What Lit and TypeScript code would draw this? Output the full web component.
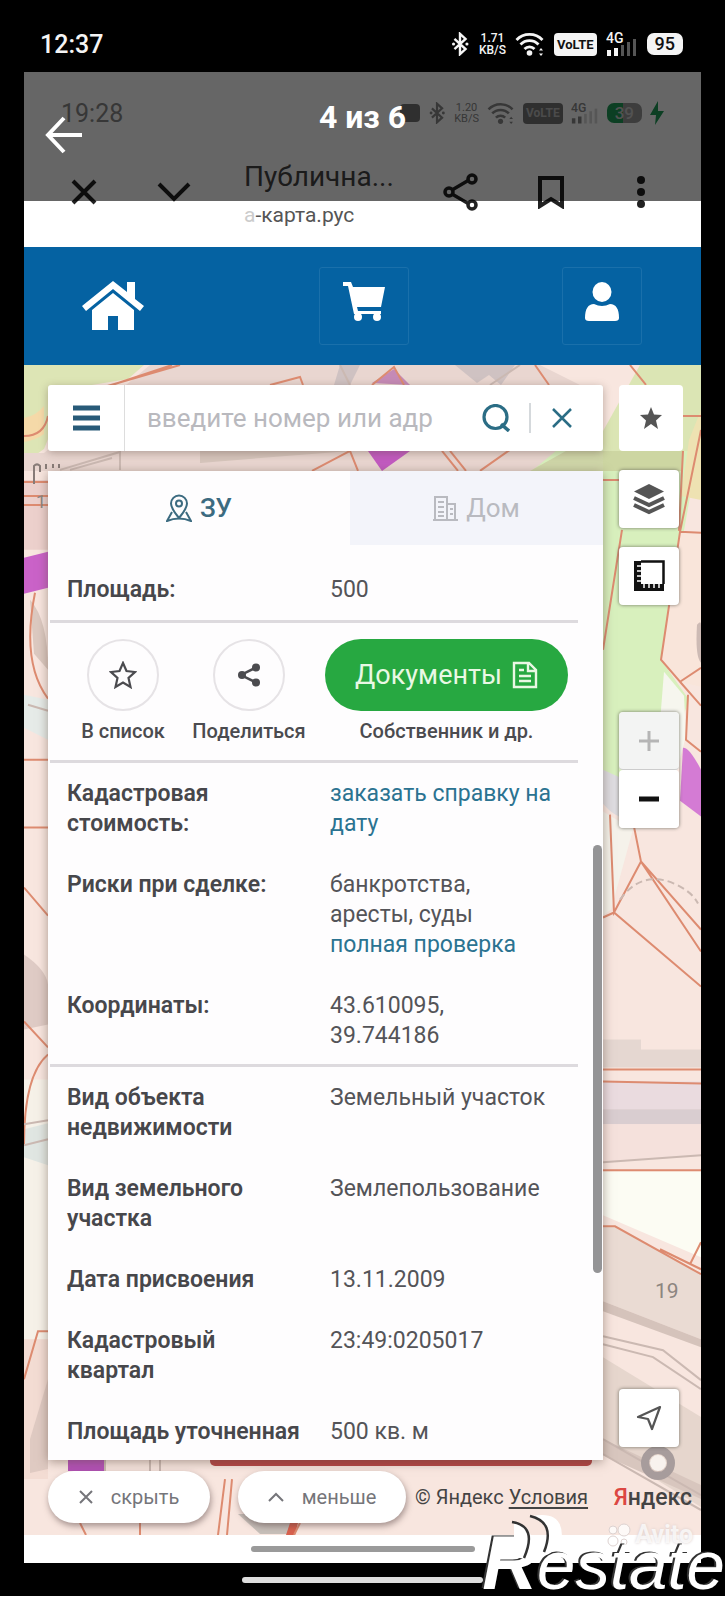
import { LitElement, html, css, svg } from "lit";
import { customElement } from "lit/decorators.js";

const bluetooth = html`<svg class="bt" viewBox="0 0 20 26"><path d="M4 7.500l12 11L10 24V2l6 5.500L4 18.500" fill="none" stroke="currentColor" stroke-width="2.600"/><circle cx="3" cy="13" r="1.700" fill="currentColor"/><circle cx="17.500" cy="13" r="1.700" fill="currentColor"/></svg>`;
const wifi = html`<svg class="wifi" viewBox="0 0 30 26"><g fill="none" stroke="currentColor" stroke-width="2.800"><path d="M1.500 9a18 18 0 0 1 26 0"/><path d="M5.500 13.500a12.500 12.500 0 0 1 18 0"/><path d="M9.500 18a7 7 0 0 1 10 0"/></g><circle cx="14.500" cy="22" r="2.800" fill="currentColor"/><path d="M26 17l2 2.500h-4zM26 25l-2-2.500h4z" fill="currentColor"/></svg>`;
const signal = html`<svg class="signal" viewBox="0 0 32 26"><g fill="currentColor"><rect x="1" y="19" width="4" height="6"/><rect x="8" y="17" width="4" height="8"/><rect x="15" y="14" width="3" height="11" opacity=".35"/><rect x="21" y="11" width="3" height="14" opacity=".35"/><rect x="27" y="8" width="3" height="17" opacity=".35"/></g><text x="0" y="12" font-size="14" font-weight="500" fill="currentColor">4G</text></svg>`;

const line = (d: string) => svg`<path d=${d}/>`;

const mapArt = html`<svg class="map-art" viewBox="24 365 677 1171" preserveAspectRatio="none" aria-hidden="true">
  <rect x="24" y="365" width="677" height="1171" fill="#f8e6df"/>
  <path d="M24 365h120l-16 14-60 10-24 60-20 14z" fill="#dde5b5"/>
  <path d="M24 418q12-2 20-12v28q-8 6-20 8z" fill="#f5d9a8"/>
  <path d="M150 365h390l40 20 20 20v66H24v-18h20z" fill="#e9d6d0"/>
  <path d="M340 365h20l-10 20h-16zM455 365h60l-14 20-12-10-12 8z" fill="#cfc2c2"/>
  <path d="M200 451h150l-150 12z" fill="#d6c5bc"/>
  <path d="M640 365h61v70L661 660l28 40-14 40-20 75-52-40V470h-70l30-25h46l20-40z" fill="#d8f0bd"/>
  <path d="M640 365h61v86h-98v-20z" fill="#dbe5b4"/>
  <path d="M530 471l36-20h40v20z" fill="#cfd6a8"/>
  <path d="M603 451h80v20h-80z" fill="#cdd6a2"/>
  <path d="M689 440l12-30v90l-20-4z" fill="#eee2b2"/>
  <path d="M680 532h21v155l-22-5-18-22z" fill="#f9e5da"/>
  <path d="M664 672l20 24 2 40-16 60-10 20-5-30z" fill="#f6f6ee"/>
  <path d="M697 625q4-5 4 0v38q-6-6-4-38z" fill="#cdbab4"/>
  <path d="M603 770l22 10v38q-10 0-22-14z" fill="#dedce0"/>
  <path d="M603 812l30 18-22 80-8 6z" fill="#f5f2ea"/>
  <path d="M372 383l22-14 16 16z" fill="#c58ab6"/>
  <path d="M368 451h42l-28 20z" fill="#c25bc0"/>
  <path d="M683 748q6-1 18 22v47l-21-16z" fill="#d47bd4"/>
  <path d="M24 558l24-6v36l-24 6z" fill="#ca62c8"/>
  <path d="M24 480h24v70H24z" fill="#ecd0cc"/><path d="M30 600q18 20 18 70l-14-16z" fill="#dcc9c0"/>
  <path d="M24 695l24 5v40l-24-12z" fill="#e6ebe8"/>
  <path d="M24 955q22 15 24 30v40l-24 5z" fill="#dfcbc5"/>
  <path d="M24 1080h24v260H24z" fill="#f6f1e8"/><path d="M24 1130l24-6v42l-24-8z" fill="#e0e6e2"/>
  <path d="M603 1040h38v10h60v18h-98z" fill="#e5d7d1"/>
  <path d="M603 1082h98v28h-98z" fill="#eadbdf"/><path d="M603 1110h98v15h-98z" fill="#d9cdd0"/><path d="M603 1125h98v32l-98 6z" fill="#f5e1dc"/>
  <path d="M603 1172h98v86l-98-42z" fill="#fcfcf3"/>
  <path d="M603 1228h12l86 46v66l-98-38z" fill="#eadbd3"/><path d="M603 1302l98 38v8l-98-36z" fill="#d5c3bb"/>
  <path d="M603 1358l98 60v90l-98-60z" fill="#e6d6cd"/><path d="M603 1440l98 46v14l-98-44z" fill="#d8c6be"/>
  <path d="M24 1340h24v140H24z" fill="#f3dcd3"/><path d="M30 1440l18-60v90l-18 4z" fill="#dfcac2"/>
  <path d="M68 1461h36v11H68z" fill="#b552b8"/>
  <path d="M238 1515h60l-8 20h-30z" fill="#c7bfb9"/><path d="M290 1524h8l-3 12h-9z" fill="#d8614e"/>
  <g fill="none" stroke="#dd8b70" stroke-width="2">
    ${line("M112 385l60-20M180 365l-76 22M270 385l30-8 3 8M372 385l22-18 10 18M535 365l14 20M630 365l16 20M312 471l38-20 8 20M442 451l16 20M450 451l16 20M480 471l34-24M24 436q20 0 24-20")}
    ${line("M24 496h24M24 505h24M24 482h24M35 593q-14 70 13 106M24 760h24M24 828h24M24 888l24 28M24 1022l24 26M48 1055q-24 20-24 90M24 1380l14-48h10")}
    ${line("M603 480h20M683 416h18M622 530l-19 120M701 430l-21 102-19 128 19 22 21-14M680 682l21 24M688 695l-2 45 15 12M680 532l21 1M683 451l-4 80")}
    ${line("M610 815l4 98 27-51 60 68M603 918l11-5 87 74M641 862l-10-50M641 862l60 90M603 1070h98M603 1082l98 2M603 1171h98M603 1227h12l86 48M660 1250l41 20M225 1480l-7 56M232 1480l-5 56M80 1524l6 12M140 1524v12M300 1524l-6 12M690 1265l11-22")}
  </g>
  <g fill="none" stroke="#cbb9b2" stroke-width="2">
    ${line("M60 470l60-18v18M70 470l42-12M340 365l10 20M490 385l30-20M603 1163l98-7M603 1337l60 14 38 30M603 1345l50 13 48 32M603 1440l98 56M603 1455l98 56M28 705l20 6M24 1125l24-4M24 1146l24-6M105 1461v12M150 1461v12M160 1461v12")}
  </g>
  <path d="M620 900q22-30 54-16 18 8 24 20" fill="none" stroke="#cbb9b2" stroke-width="2" stroke-dasharray="7 4"/>
  <path d="M34 484v-18q3-3 6 0v6M46 464v5M53 464v4M59 464v4" stroke="#887c78" stroke-width="2" fill="none"/>
  <circle cx="658" cy="1464" r="13" fill="none" stroke="#a79c9c" stroke-width="8"/><circle cx="658" cy="1464" r="8" fill="#f8f2ee"/>
  <rect x="210" y="1455" width="382" height="12" rx="5" fill="#b54444"/>
  <text x="655" y="1299" font-size="21" fill="#8d8580">19</text>
  <text x="36" y="508" font-size="18" fill="#8d8580">1</text>
</svg>`;

type Field = { label: string; value: string; link?: string };

@customElement("cadastre-fields")
class CadastreFields extends LitElement {
  static properties = { rows: { attribute: false } };
  declare rows: Field[];

  static styles = css`
    dl { margin: 0; padding: 16px 25px 13px 19px; display: flex; flex-direction: column; gap: 31px; font-size: 23px; line-height: 30px; }
    .row { display: grid; grid-template-columns: 247px 1fr; column-gap: 16px; }
    dt { font-weight: 600; color: #47474b; white-space: pre-line; }
    dd { margin: 0; color: #545458; white-space: pre-line; }
    a { color: #2b7391; text-decoration: none; display: block; }
  `;

  render() {
    return html`<dl>${this.rows.map(r => html`<div class="row"><dt>${r.label}</dt><dd>${r.value}${r.link ? html`<a href="#">${r.link}</a>` : ""}</dd></div>`)}</dl>`;
  }
}

@customElement("app-root")
class AppRoot extends LitElement {
  static styles = css`
    :host { display: block; position: relative; overflow: hidden; background: #000; font-family: Roboto, "Noto Sans", sans-serif; color: #444; }
    * { box-sizing: border-box; }
    button { font: inherit; color: inherit; background: none; border: 0; padding: 0; margin: 0; display: flex; align-items: center; justify-content: center; }
    svg { display: block; flex: none; }

    .status { height: 72px; padding: 16px 40px 0; display: flex; align-items: center; color: #f4f4f4; }
    .clock { font-size: 25px; font-weight: 500; margin-right: auto; }
    .bt { width: 20px; height: 24px; }
    .wifi { width: 30px; height: 26px; }
    .signal { width: 32px; height: 26px; }
    .icons { display: flex; align-items: center; gap: 9px; }
    .speed { font-size: 12px; line-height: 12px; font-weight: 500; text-align: center; }
    .volte { font-size: 13px; line-height: 23px; font-weight: 700; background: #f4f4f4; color: #111; border-radius: 4px; padding: 0 3px; }
    .battery { font-size: 18px; line-height: 22px; font-weight: 500; background: #f4f4f4; color: #111; border-radius: 7px; padding: 0 8px; margin-right: 2px; }

    .viewer { position: relative; margin: 0 24px; background: #fff; }
    .shade { position: absolute; inset: 0 0 auto 0; height: 129px; background: rgba(0, 0, 0, .6); color: #fff; z-index: 2; }
    .counter { position: absolute; top: 26px; left: 0; right: 0; text-align: center; font-size: 32px; line-height: 38px; font-weight: 700; }
    .back { position: absolute; left: 20px; top: 44px; }

    .inner-status { height: 82px; padding: 0 37px; display: flex; align-items: center; color: #8a8a8a; }
    .inner-status .clock { font-size: 25px; font-weight: 400; }
    .inner-status .icons { gap: 8px; }
    .nfc { width: 20px; height: 18px; border-radius: 4px; background: #777; }
    .inner-status .bt { width: 18px; height: 22px; }
    .inner-status .wifi { width: 28px; height: 24px; }
    .inner-status .signal { width: 28px; height: 24px; }
    .inner-status .volte { background: #777; color: #bbb; font-size: 12px; line-height: 21px; }
    .inner-status .speed { font-size: 11px; line-height: 11px; font-weight: 400; }
    .inner-status .battery { background: linear-gradient(90deg, #1f9e58 45%, #999 45%); color: #ccc; font-size: 17px; line-height: 20px; margin: 0; }
    .bolt { width: 14px; height: 24px; }

    .toolbar { height: 93px; padding: 8px 40px; display: flex; align-items: flex-start; gap: 50px; color: #222; }
    .toolbar button { width: 40px; height: 60px; }
    .page { flex: 1; min-width: 0; display: flex; flex-direction: column; gap: 8px; white-space: nowrap; line-height: 30px; font-size: 28px; color: #444; }
    .url { font-size: 21px; color: #555; }
    .url i { color: #ccc; font-style: normal; }

    .site { background: #0562a2; height: 118px; padding: 0 59px 0 37px; display: flex; align-items: center; justify-content: space-between; color: #fff; }
    .site button { width: 90px; height: 78px; padding-bottom: 8px; border: 1px solid #1a70ab; border-radius: 3px; }
    .site .home { width: 104px; border-color: transparent; padding: 0; }
    .site .user { width: 80px; }

    .map { position: relative; }
    .map-art { position: absolute; inset: 0; width: 100%; height: 100%; }
    .content { position: relative; padding: 20px 16px 0 24px; display: grid; grid-template-columns: minmax(0, 1fr) 66px; column-gap: 16px; }
    .search { height: 66px; display: flex; align-items: center; background: #fff; border-radius: 3px; box-shadow: 0 2px 8px rgba(90, 70, 60, .4); margin-bottom: 20px; color: #2b6d85; }
    .search .menu { width: 77px; height: 66px; border-right: 1px solid #ddd; color: #285a78; }
    .search input { flex: 1; min-width: 0; height: 50px; border: 0; background: none; padding: 0 0 0 22px; font: inherit; font-size: 26px; outline: 0; }
    .search input::placeholder { color: #b9b9be; opacity: 1; }
    .search .find { width: 66px; height: 40px; margin-left: 16px; }
    .search .clear { width: 64px; height: 30px; border-left: 2px solid #d5d9dc; margin-right: 10px; }

    .panel { position: relative; background: #fefdfe; box-shadow: 0 2px 10px rgba(90, 70, 60, .5); }
    .tabs { display: grid; grid-template-columns: 302px 1fr; height: 74px; font-size: 26px; }
    .tabs button { gap: 8px; color: #3c6b80; font-weight: 500; }
    .tabs .off { background: #f3f4fa; color: #b9bac0; font-weight: 400; }
    .sep { border: 0; margin: 0 25px 0 2px; height: 3px; background: #dddade; }
    .area { display: block; height: 75px; padding-top: 13px; margin-top: 1px; margin-bottom: -1px; }
    .actions { height: 137px; padding: 16px 35px 0 30px; display: flex; font-size: 20px; font-weight: 500; color: #4b4b4f; }
    .action { width: 90px; display: flex; flex-direction: column; align-items: center; gap: 8px; line-height: 24px; white-space: nowrap; }
    .action.wide { width: 162px; }
    .action.docs { flex: 1; margin-left: -5px; }
    .round { width: 72px; height: 72px; border: 2px solid #e6e3e6; border-radius: 50%; }
    .green { width: 100%; height: 72px; border-radius: 36px; background: #27a841; color: #e9f8e4; font-size: 27px; font-weight: 400; gap: 10px; }
    .thumb { position: absolute; right: 1px; top: 374px; width: 9px; height: 428px; border-radius: 5px; background: #949496; }

    .tools { display: flex; flex-direction: column; align-items: flex-start; padding-bottom: 13px; color: #555; }
    .tools button { width: 60px; height: 58px; background: #fff; border-radius: 4px; box-shadow: 0 0 3px 1px rgba(90, 90, 80, .5); margin-bottom: 19px; }
    .tools .fav { width: 64px; height: 66px; box-shadow: none; }
    .zoom { margin-top: 88px; border-radius: 4px; box-shadow: 0 0 3px 1px rgba(90, 90, 80, .5); }
    .zoom button { box-shadow: none; margin: 0; color: #111; }
    .zoom .plus { background: #f3f4f3; color: #b5b5b5; border-bottom: 1px solid #ccc; }
    .tools .locate { margin: auto 0 0; }

    .foot { position: relative; display: flex; align-items: center; padding: 11px 9px 12px 24px; height: 75px; font-size: 20px; }
    .pill { width: 162px; height: 52px; background: #fff; border-radius: 26px; box-shadow: 1px 3px 6px rgba(80, 60, 60, .5); gap: 18px; font-size: 20px; color: #75757a; }
    .pill.less { width: 168px; margin: 0 9px 0 28px; }
    .foot a { color: inherit; text-underline-offset: 3px; }
    .yandex { margin-left: auto; font-size: 23px; font-weight: 500; }
    .yandex b { color: #dc4742; font-weight: 500; }

    .home-bar { height: 28px; display: flex; justify-content: center; align-items: center; }
    .home-bar i { width: 224px; height: 6px; border-radius: 3px; background: #9a9a9a; }
    .avito { position: absolute; right: 8px; bottom: 14px; display: flex; align-items: center; gap: 3px; font-size: 25px; line-height: 28px; font-weight: 700; color: rgba(255, 255, 255, .75); text-shadow: 0 0 3px #d8cccb; }
    .system { height: 33px; display: flex; justify-content: center; align-items: center; }
    .system i { width: 241px; height: 6px; border-radius: 3px; background: #ddd; }

    .mark { position: absolute; right: 0; bottom: 0; display: flex; align-items: baseline; font-family: "Liberation Sans", Arial, sans-serif; font-style: italic; font-size: 69px; line-height: 60px; color: #fff; text-shadow: -2px -1px 0 #333; }
    .mark b { font-size: 76px; }
    .arcs { position: absolute; left: 22px; top: -20px; width: 60px; height: 54px; }
  `;

  render() {
    return html`
      <header class="status">
        <span class="clock">12:37</span>
        <div class="icons">${bluetooth}<span class="speed">1.71<br>KB/S</span>${wifi}<span class="volte">VoLTE</span>${signal}<span class="battery">95</span></div>
      </header>
      <main class="viewer">
        <div class="shade">
          <button class="back" aria-label="Назад"><svg width="40" height="38" viewBox="0 0 40 38"><path d="M20 2L4 19l16 17M4 19h34" fill="none" stroke="#fff" stroke-width="4"/></svg></button>
          <div class="counter">4 из 6</div>
        </div>
        <div class="inner-status">
          <span class="clock">19:28</span>
          <div class="icons"><span class="nfc"></span>${bluetooth}<span class="speed">1.20<br>KB/S</span>${wifi}<span class="volte">VoLTE</span>${signal}<span class="battery">39</span><svg class="bolt" viewBox="0 0 14 24"><path d="M8 0L0 14h6l-1 10 9-14H8z" fill="#1f9e58"/></svg></div>
        </div>
        <div class="toolbar">
          <button aria-label="Закрыть"><svg width="28" height="28" viewBox="0 0 28 28"><path d="M3 3l22 22M25 3L3 25" stroke="currentColor" stroke-width="4"/></svg></button>
          <button aria-label="Свернуть"><svg width="34" height="22" viewBox="0 0 34 22"><path d="M2 3l15 15L32 3" fill="none" stroke="currentColor" stroke-width="4"/></svg></button>
          <div class="page"><span>Публична...</span><span class="url"><i>а</i>-карта.рус</span></div>
          <button aria-label="Поделиться"><svg width="36" height="38" viewBox="0 0 36 38"><g fill="none" stroke="currentColor" stroke-width="3.500"><path d="M9 17L26 7M9 21l17 10"/><circle cx="6" cy="19" r="4"/><circle cx="29" cy="6" r="4"/><circle cx="29" cy="32" r="4"/></g></svg></button>
          <button aria-label="Закладка"><svg width="28" height="34" viewBox="0 0 28 34"><path d="M3 3h22v28l-11-7-11 7z" fill="none" stroke="currentColor" stroke-width="4"/></svg></button>
          <button aria-label="Ещё"><svg width="10" height="34" viewBox="0 0 10 34"><g fill="currentColor"><circle cx="5" cy="5" r="4"/><circle cx="5" cy="17" r="4"/><circle cx="5" cy="29" r="4"/></g></svg></button>
        </div>
        <nav class="site">
          <button class="home" aria-label="Главная"><svg width="62" height="50" viewBox="0 0 62 50"><path d="M31 0L0 25l4 5 27-22 27 22 4-5-9-7V1h-8v10z" fill="#fff"/><path d="M31 12L10 29v20h16V35h10v14h16V29z" fill="#fff"/></svg></button>
          <button aria-label="Корзина"><svg width="44" height="40" viewBox="0 0 44 40"><path d="M1 0h8l2 5h32l-4 20H15l1 4h23v3H12L6 4H1z" fill="#fff"/><circle cx="16" cy="35" r="4" fill="#fff"/><circle cx="35" cy="35" r="4" fill="#fff"/></svg></button>
          <button class="user" aria-label="Профиль"><svg width="34" height="40" viewBox="0 0 34 40"><ellipse cx="17" cy="10" rx="9.500" ry="10" fill="#fff"/><path d="M0 36c0-9 3-14 9-14q8 4 16 0c6 0 9 5 9 14q0 3-4 3H4q-4 0-4-3z" fill="#fff"/></svg></button>
        </nav>
        <section class="map">
          ${mapArt}
          <div class="content">
            <div>
              <div class="search">
                <button class="menu" aria-label="Меню"><svg width="27" height="26" viewBox="0 0 27 26"><path d="M0 3h27M0 13h27M0 23h27" stroke="currentColor" stroke-width="5"/></svg></button>
                <input aria-label="Поиск" placeholder="введите номер или адр">
                <button class="find" aria-label="Найти"><svg width="28" height="28" viewBox="0 0 28 28"><circle cx="13.500" cy="13" r="11.500" fill="none" stroke="currentColor" stroke-width="3.200"/><path d="M19 20l8 7" stroke="currentColor" stroke-width="3.500"/></svg></button>
                <button class="clear" aria-label="Очистить"><svg width="20" height="20" viewBox="0 0 20 20"><path d="M1 1l18 18M19 1L1 19" stroke="currentColor" stroke-width="2.500"/></svg></button>
              </div>
              <div class="panel">
                <div class="tabs">
                  <button><svg width="26" height="28" viewBox="0 0 26 28"><g fill="none" stroke="currentColor" stroke-width="2"><path d="M13 24C8 18 5 14 5 9.500a8 8 0 0 1 16 0C21 14 18 18 13 24z"/><circle cx="13" cy="9.500" r="3"/><path d="M6 18l-5 9q12-5 24 0l-5-9"/></g></svg>ЗУ</button>
                  <button class="off"><svg width="25" height="26" viewBox="0 0 25 26"><path d="M2 25V2h12v23M14 9h8v16M0 25h25M5 7h6M5 12h6M5 17h6M5 21h6M17 14h3M17 19h3" fill="none" stroke="currentColor" stroke-width="2"/></svg>Дом</button>
                </div>
                <cadastre-fields class="area" .rows=${[{ label: "Площадь:", value: "500" }]}></cadastre-fields>
                <hr class="sep">
                <div class="actions">
                  <div class="action"><button class="round" aria-label="В список"><svg width="28" height="28" viewBox="0 0 28 28"><path d="M14 2l3.500 8 8.500 1-6.500 6 2 9-7.500-4.500L6.500 26l2-9L2 11l8.500-1z" fill="none" stroke="currentColor" stroke-width="2.200"/></svg></button>В список</div>
                  <div class="action wide"><button class="round" aria-label="Поделиться"><svg width="24" height="24" viewBox="0 0 24 24"><path d="M20 4L4 12l16 8" fill="none" stroke="currentColor" stroke-width="2.500"/><circle cx="19" cy="4.500" r="4" fill="currentColor"/><circle cx="5" cy="12" r="4" fill="currentColor"/><circle cx="19" cy="19.500" r="4" fill="currentColor"/></svg></button>Поделиться</div>
                  <div class="action docs"><button class="green">Документы<svg width="26" height="28" viewBox="0 0 26 28"><path d="M2 2h15l7 7v17H2zM16 2v8h8M7 9h5M7 15h12M7 20h12" fill="none" stroke="currentColor" stroke-width="2.400"/></svg></button>Собственник и др.</div>
                </div>
                <hr class="sep">
                <cadastre-fields .rows=${[
                  { label: "Кадастровая\nстоимость:", value: "", link: "заказать справку на дату" },
                  { label: "Риски при сделке:", value: "банкротства,\nаресты, суды", link: "полная проверка" },
                  { label: "Координаты:", value: "43.610095,\n39.744186" },
                ]}></cadastre-fields>
                <hr class="sep">
                <cadastre-fields .rows=${[
                  { label: "Вид объекта\nнедвижимости", value: "Земельный участок" },
                  { label: "Вид земельного\nучастка", value: "Землепользование" },
                  { label: "Дата присвоения", value: "13.11.2009" },
                  { label: "Кадастровый\nквартал", value: "23:49:0205017" },
                  { label: "Площадь уточненная", value: "500 кв. м" },
                ]}></cadastre-fields>
                <div class="thumb"></div>
              </div>
            </div>
            <aside class="tools">
              <button class="fav" aria-label="Избранное"><svg width="22" height="22" viewBox="0 0 22 22"><path d="M11 0l3 7.500 8 .5-6 5.500 2 8.500-7-5-7 5 2-8.500L0 8l8-.500z" fill="currentColor"/></svg></button>
              <button aria-label="Слои"><svg width="32" height="32" viewBox="0 0 32 32"><path d="M16 1l15 7.500L16 16 1 8.500z" fill="currentColor"/><path d="M1 15l15 7 15-7M1 22l15 7 15-7" fill="none" stroke="currentColor" stroke-width="4"/></svg></button>
              <button aria-label="Линейка"><svg width="32" height="32" viewBox="0 0 32 32"><path d="M1 1h7v23h23v7H1z" fill="#111"/><path d="M8 1.500h22.500V24" fill="none" stroke="#111" stroke-width="2.500"/><path d="M4 6h4M4 11h4M4 16h4M4 21h4M11 24v4M16 24v4M21 24v4M26 24v4" stroke="#fff" stroke-width="1.500"/></svg></button>
              <div class="zoom">
                <button class="plus" aria-label="Приблизить"><svg width="20" height="20" viewBox="0 0 20 20"><path d="M10 0v20M0 10h20" stroke="currentColor" stroke-width="3"/></svg></button>
                <button aria-label="Отдалить"><svg width="20" height="20" viewBox="0 0 20 20"><path d="M0 10h20" stroke="currentColor" stroke-width="5"/></svg></button>
              </div>
              <button class="locate" aria-label="Моё местоположение"><svg width="26" height="26" viewBox="0 0 26 26"><path d="M24 2L2 12l10 2 4 10z" fill="none" stroke="currentColor" stroke-width="2.200" stroke-linejoin="round"/></svg></button>
            </aside>
          </div>
          <footer class="foot">
            <button class="pill"><svg width="14" height="14" viewBox="0 0 14 14"><path d="M1 1l12 12M13 1L1 13" stroke="currentColor" stroke-width="2"/></svg>скрыть</button>
            <button class="pill less"><svg width="16" height="10" viewBox="0 0 16 10"><path d="M1 9l7-7 7 7" fill="none" stroke="currentColor" stroke-width="2"/></svg>меньше</button>
            <span>© Яндекс <a href="#">Условия</a></span>
            <span class="yandex"><b>Я</b>ндекс</span>
          </footer>
        </section>
        <div class="home-bar"><i></i></div>
        <span class="avito"><svg width="26" height="26" viewBox="0 0 26 26"><g fill="#fff" fill-opacity=".75" stroke="#ddd2d0"><circle cx="7" cy="8" r="4"/><circle cx="18" cy="8" r="6"/><circle cx="7" cy="19" r="5"/><circle cx="18" cy="20" r="3"/></g></svg>Avito</span>
      </main>
      <div class="system"><i></i></div>
      <div class="mark"><svg class="arcs" viewBox="0 0 60 54"><path d="M10 10Q36 12 22 46l-12-2zM28 3q30-6 30 20-2 14-18 20 12-30-12-40z" fill="#fff"/><path d="M8 9q26 4 12 36M26 3q26 6 14 36" fill="none" stroke="#333" stroke-width="2.500"/></svg><b>R</b><span>estate</span></div>
    `;
  }
}
